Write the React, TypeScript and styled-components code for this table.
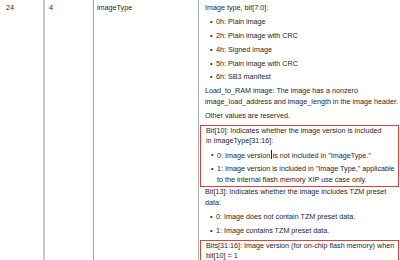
import React from "react";
import styled, { createGlobalStyle } from "styled-components";

const Global = createGlobalStyle`
  html, body { margin: 0; padding: 0; background: #fff; }
  body {
    font-family: "Liberation Sans", Arial, sans-serif;
    font-size: 7.2px;
    color: #262626;
    overflow: hidden;
  }
`;

const Table = styled.div`
  display: flex;
  width: 400px;
  height: 260px;
  overflow: hidden;
`;

const Cell = styled.div<{ $w: number; $border: string; $bw: number; $pl: number }>`
  flex: 0 0 ${(p) => p.$w}px;
  box-sizing: border-box;
  border-right: ${(p) => p.$bw}px solid ${(p) => p.$border};
  padding: 3px 0 0 ${(p) => p.$pl}px;
  line-height: 10.5px;
`;

const Content = styled.div`
  flex: 1 1 auto;
  padding: 3px 0 0 0;
  line-height: 10.5px;
  min-width: 0;
`;

const Para = styled.p`
  margin: 0 0 3.4px 0;
  padding: 0 0 0 6px;
`;

const List = styled.ul`
  list-style: none;
  margin: 0 0 3.4px 0;
  padding: 0 0 0 11px;
`;

const Item = styled.li`
  position: relative;
  padding-left: 6px;
  margin-bottom: 3.4px;
  &:last-child { margin-bottom: 0; }
  &::before {
    content: "•";
    position: absolute;
    left: 0;
    top: 0;
  }
`;

const RedBox = styled.div`
  border: 1.2px solid #e2413b;
  margin: 0 1px 0.5px 1px;
  padding: 0 0 0.5px 0;
  & > ${Para} { padding-left: 5px; }
  & > ${List} { padding-left: 10px; }
  & > *:last-child { margin-bottom: 0; }
`;

const Caret = styled.span`
  display: inline-block;
  width: 1px;
  height: 9px;
  background: #222;
  vertical-align: -1.5px;
  margin: 0 1px 0 0.5px;
`;

export default function App() {
  return (
    <>
      <Global />
      <Table>
        <Cell $w={45} $border="#c9c9c9" $bw={2} $pl={6}>24</Cell>
        <Cell $w={49} $border="#a3a3a3" $bw={1} $pl={4}>4</Cell>
        <Cell $w={105} $border="#b0b0b0" $bw={1} $pl={3}>imageType</Cell>
        <Content>
          <Para>Image type, bit[7:0]:</Para>
          <List>
            <Item>0h: Plain image</Item>
            <Item>2h: Plain image with CRC</Item>
            <Item>4h: Signed image</Item>
            <Item>5h: Plain image with CRC</Item>
            <Item>6h: SB3 manifest</Item>
          </List>
          <Para>
            Load_to_RAM image: The image has a nonzero image_load_address and image_length in the image header.
          </Para>
          <Para>Other values are reserved.</Para>
          <RedBox>
            <Para>
              Bit[10]: Indicates whether the image version is included
              <br />
              in ImageType[31:16]:
            </Para>
            <List>
              <Item>
                0: Image version<Caret />is not included in "ImageType."
              </Item>
              <Item>
                1: Image version is included in "Image Type," applicable to the internal flash memory XIP use case only.
              </Item>
            </List>
          </RedBox>
          <Para>Bit[13]: Indicates whether the image includes TZM preset data:</Para>
          <List>
            <Item>0: Image does not contain TZM preset data.</Item>
            <Item>1: Image contains TZM preset data.</Item>
          </List>
          <RedBox>
            <Para>Bits[31:16]: Image version (for on-chip flash memory) when bit[10] = 1</Para>
          </RedBox>
        </Content>
      </Table>
    </>
  );
}
